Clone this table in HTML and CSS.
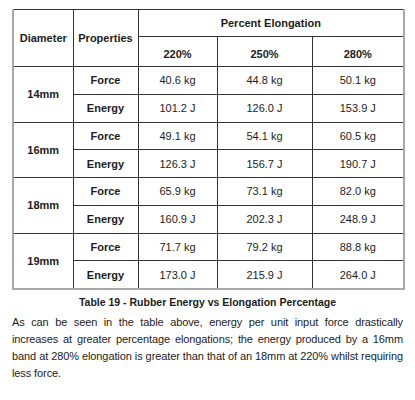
FILE: index.html
```html
<!DOCTYPE html>
<html lang="en">
<head>
    <meta charset="UTF-8">
    <meta name="viewport" content="width=device-width, initial-scale=1.0">
    <title>Rubber Energy vs Elongation Percentage</title>
    <link rel="stylesheet" href="styles.css">
</head>
<body>
    <div class="page">
        <table class="data-table">
            <colgroup>
                <col class="c-dia">
                <col class="c-prop">
                <col class="c-220">
                <col class="c-250">
                <col class="c-280">
            </colgroup>
            <thead>
                <tr class="head-top">
                    <th rowspan="2">Diameter</th>
                    <th rowspan="2">Properties</th>
                    <th colspan="3">Percent Elongation</th>
                </tr>
                <tr class="head-sub">
                    <th>220%</th>
                    <th>250%</th>
                    <th>280%</th>
                </tr>
            </thead>
            <tbody>
                <tr>
                    <th rowspan="2">14mm</th>
                    <th>Force</th>
                    <td>40.6 kg</td><td>44.8 kg</td><td>50.1 kg</td>
                </tr>
                <tr>
                    <th>Energy</th>
                    <td>101.2 J</td><td>126.0 J</td><td>153.9 J</td>
                </tr>
                <tr>
                    <th rowspan="2">16mm</th>
                    <th>Force</th>
                    <td>49.1 kg</td><td>54.1 kg</td><td>60.5 kg</td>
                </tr>
                <tr>
                    <th>Energy</th>
                    <td>126.3 J</td><td>156.7 J</td><td>190.7 J</td>
                </tr>
                <tr>
                    <th rowspan="2">18mm</th>
                    <th>Force</th>
                    <td>65.9 kg</td><td>73.1 kg</td><td>82.0 kg</td>
                </tr>
                <tr>
                    <th>Energy</th>
                    <td>160.9 J</td><td>202.3 J</td><td>248.9 J</td>
                </tr>
                <tr>
                    <th rowspan="2">19mm</th>
                    <th>Force</th>
                    <td>71.7 kg</td><td>79.2 kg</td><td>88.8 kg</td>
                </tr>
                <tr>
                    <th>Energy</th>
                    <td>173.0 J</td><td>215.9 J</td><td>264.0 J</td>
                </tr>
            </tbody>
        </table>

        <p class="caption">Table 19 - Rubber Energy vs Elongation Percentage</p>

        <p class="body-text">As can be seen in the table above, energy per unit input force drastically increases at greater percentage elongations; the energy produced by a 16mm band at 280% elongation is greater than that of an 18mm at 220% whilst requiring less force.</p>
    </div>
</body>
</html>
```

FILE: styles.css
```css
body {
    margin: 0;
    background: #fff;
    font-family: "Liberation Sans", Arial, sans-serif;
    color: #1c1c1c;
}
.page {
    width: 391px;
    margin: 9px 0 0 12px;
}
.data-table {
    width: 391px;
    border-collapse: collapse;
    table-layout: fixed;
    font-size: 11px;
    border-top: 1px solid #777;
    border-left: 2px solid #a8a8a8;
    border-right: 2px solid #a8a8a8;
    border-bottom: 2px solid #a8a8a8;
}
.c-dia { width: 60px; }
.c-prop { width: 65px; }
.c-220 { width: 79px; }
.c-250 { width: 95px; }
.c-280 { width: 92px; }
.data-table th, .data-table td {
    border: 1px solid #333;
    text-align: center;
    padding: 0;
    height: 26.75px;
}
.data-table th {
    font-weight: bold;
}
.head-top th {
    height: 26px;
}
.head-sub th {
    height: 25px;
    padding-top: 4px;
}
.caption {
    margin: 6px 0 0;
    text-align: center;
    font-size: 10.5px;
    font-weight: bold;
}
.body-text {
    margin: 6px 0 0;
    font-size: 11px;
    line-height: 17px;
    letter-spacing: -0.1px;
    text-align: justify;
}
```
